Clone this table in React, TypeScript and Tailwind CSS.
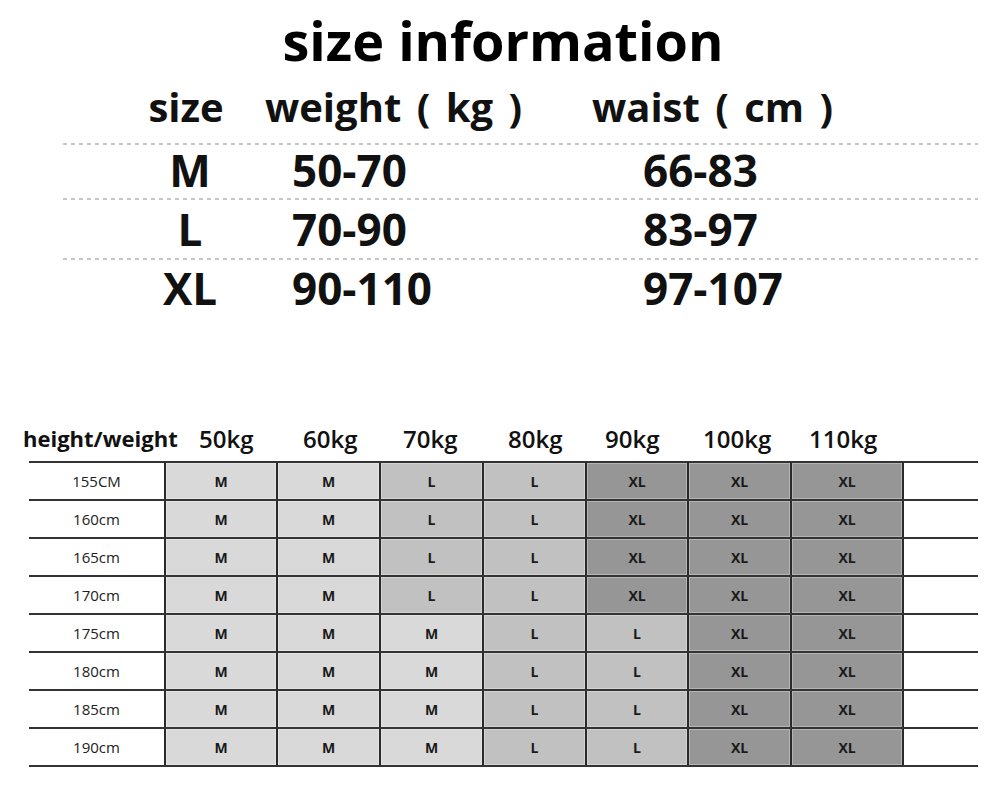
import React from 'react'

const heights = ['155CM', '160cm', '165cm', '170cm', '175cm', '180cm', '185cm', '190cm']

const chart: string[][] = [
  ['M', 'M', 'L', 'L', 'XL', 'XL', 'XL'],
  ['M', 'M', 'L', 'L', 'XL', 'XL', 'XL'],
  ['M', 'M', 'L', 'L', 'XL', 'XL', 'XL'],
  ['M', 'M', 'L', 'L', 'XL', 'XL', 'XL'],
  ['M', 'M', 'M', 'L', 'L', 'XL', 'XL'],
  ['M', 'M', 'M', 'L', 'L', 'XL', 'XL'],
  ['M', 'M', 'M', 'L', 'L', 'XL', 'XL'],
  ['M', 'M', 'M', 'L', 'L', 'XL', 'XL'],
]

const colWidths = ['w-[112px]', 'w-[103px]', 'w-[103px]', 'w-[103px]', 'w-[102px]', 'w-[103px]', 'w-[112px]']

const fill: Record<string, string> = {
  M: 'bg-[#d9d9d9]',
  L: 'bg-[#c1c1c1]',
  XL: 'bg-[#969696]',
}

const weights = [
  { label: '50kg', w: 'w-[104px]' },
  { label: '60kg', w: 'w-[100px]' },
  { label: '70kg', w: 'w-[105px]' },
  { label: '80kg', w: 'w-[97px]' },
  { label: '90kg', w: 'w-[98px]' },
  { label: '100kg', w: 'w-[106px]' },
  { label: '110kg', w: 'w-[100px]' },
]

function Dots() {
  return (
    <div className="ml-[63px] w-[915px] h-[2px] bg-[repeating-linear-gradient(90deg,#c6c6c6_0_4px,transparent_4px_8px)]" />
  )
}

function SizeRow({ size, weight, waist, className }: { size: string; weight: string; waist: string; className: string }) {
  return (
    <div className={`flex text-[44px] leading-none font-bold text-[#111] ${className}`}>
      <div className="ml-[140px] w-[100px] text-center">{size}</div>
      <div className="w-[350px] pl-[52px]">{weight}</div>
      <div className="pl-[53px]">{waist}</div>
    </div>
  )
}

export default function App() {
  return (
    <div className="w-[1000px] h-[786px] bg-white overflow-hidden font-['Open_Sans',sans-serif] text-black">
      {/* ── Top: size information ── */}
      <div className="h-[86px] pt-[13px] pl-[6px] text-center text-[54px] leading-none font-bold">size information</div>

      <div className="flex h-[57px] pt-[1px] text-[40px] leading-none font-bold text-[#111] [word-spacing:5px]">
        <div className="ml-[136px] w-[100px] text-center">size</div>
        <div className="w-[356px] pl-[29px]">weight ( kg )</div>
        <div>waist ( cm )</div>
      </div>
      <Dots />
      <SizeRow size="M" weight="50-70" waist="66-83" className="h-[53px] pt-[3px]" />
      <Dots />
      <SizeRow size="L" weight="70-90" waist="83-97" className="h-[58px] pt-[7px]" />
      <Dots />
      <SizeRow size="XL" weight="90-110" waist="97-107" className="h-[150px] pt-[6px]" />

      {/* ── Bottom: height / weight chart ── */}
      <div className="flex h-[51px] pt-[17px] pl-[23px] leading-none font-bold text-[#111]">
        <div className="w-[176px] text-[22px]">height/weight</div>
        {weights.map((c) => (
          <div key={c.label} className={`${c.w} text-[24px] font-semibold`}>{c.label}</div>
        ))}
      </div>

      <div className="ml-[29px] w-[949px] border-t-2 border-[#333]">
        {heights.map((h, r) => (
          <div key={h} className="flex h-[38px] border-b-2 border-[#333]">
            <div className="w-[135px] flex items-center justify-center text-[15px] font-medium text-[#222]">{h}</div>
            {chart[r].map((s, c) => (
              <div
                key={c}
                className={`${colWidths[c]} ${fill[s]} border-l-2 border-[#2a2a2a] flex items-center justify-center text-[14px] font-bold text-[#1a1a1a] shadow-[inset_0_0_0_1px_rgba(255,255,255,0.3)]`}
              >
                {s}
              </div>
            ))}
            <div className="flex-1 border-l-2 border-[#2a2a2a]" />
          </div>
        ))}
      </div>
    </div>
  )
}
